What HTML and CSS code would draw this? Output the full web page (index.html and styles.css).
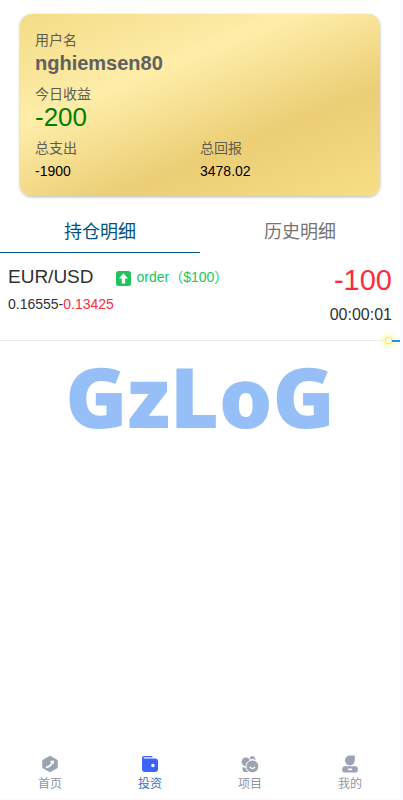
FILE: index.html
```
<!DOCTYPE html>
<html lang="zh">

<head>
    <meta charset="UTF-8">
    <meta name="viewport" content="width=device-width, initial-scale=1">
    <title>投资</title>
    <link rel="stylesheet" href="styles.css">
</head>

<body>
    <div class="page">
        <section class="card">
            <div class="card-item">
                <div class="label">用户名</div>
                <div class="user-name">nghiemsen80</div>
            </div>
            <div class="card-item">
                <div class="label">今日收益</div>
                <div class="income">-200</div>
            </div>
            <div class="card-row">
                <div class="card-item">
                    <div class="label">总支出</div>
                    <div class="total">-1900</div>
                </div>
                <div class="card-item">
                    <div class="label">总回报</div>
                    <div class="total">3478.02</div>
                </div>
            </div>
        </section>

        <div class="tabs">
            <button class="tab active" type="button">持仓明细</button>
            <button class="tab" type="button">历史明细</button>
        </div>

        <main class="main">
            <div class="order">
                <div class="order-left">
                    <div class="order-title">
                        <span class="pair">EUR/USD</span>
                        <svg class="arrow" viewBox="0 0 15 15">
                            <rect width="15" height="15" rx="2.5" fill="#21c45a"/>
                            <path d="M7.5 2.2L12 7.4H9.2V12.4H5.8V7.4H3z" fill="#fff"/>
                        </svg>
                        <span class="amount">order（$100）</span>
                    </div>
                    <div class="price">0.16555-<span class="down">0.13425</span></div>
                </div>
                <div class="order-right">
                    <div class="profit">-100</div>
                    <div class="time">00:00:01</div>
                </div>
            </div>
            <div class="countdown">
                <span class="dot"></span>
                <span class="rest"></span>
            </div>
            <div class="logo">GzLoG</div>
        </main>

        <nav class="nav">
            <a class="nav-item" href="#">
                <svg viewBox="0 0 18 18">
                    <path d="M9 .8L15.8 4.5Q16.8 5 16.8 6V12Q16.8 13 15.8 13.5L9 17.3L2.2 13.5Q1.2 13 1.2 12V6Q1.2 5 2.2 4.5z" fill="#9ca3b2"/>
                    <path d="M5 12.4Q9.2 11.8 11 7.6" fill="none" stroke="#fff" stroke-width="1.8"/>
                    <path d="M8.8 6L13 5.4L12.6 9.4z" fill="#fff"/>
                </svg>
                <span>首页</span>
            </a>
            <a class="nav-item active" href="#">
                <svg viewBox="0 0 18 18">
                    <path d="M3 1H10.6Q11.6 1 11.6 2.2H3.3Q2.6 2.2 2.6 2.8Q2.6 3.4 3.3 3.4H14Q17 3.4 17 6V14Q17 17 14 17H4Q1 17 1 14V3Q1 1 3 1z" fill="#3b63fb"/>
                    <circle cx="11.9" cy="10.5" r="1.7" fill="#fff"/>
                </svg>
                <span>投资</span>
            </a>
            <a class="nav-item" href="#">
                <svg viewBox="0 0 18 18">
                    <circle cx="5" cy="6.8" r="4.4" fill="#9ca3b2"/>
                    <path d="M8.8 2.2Q12 -.3 13.6 2.6L15 5.3Q11.5 3.2 9.4 4.5z" fill="#9ca3b2"/>
                    <path d="M1.5 12.2L5 12.8Q5.6 15.5 7.3 17H3.2Q1.2 16.8 1.5 12.2z" fill="#9ca3b2"/>
                    <circle cx="11.4" cy="11.4" r="6.4" fill="#9ca3b2" stroke="#fff"/>
                    <path d="M8.8 11.8Q11.4 15 14 11.8" fill="none" stroke="#fff" stroke-width="1.3"/>
                </svg>
                <span>项目</span>
            </a>
            <a class="nav-item" href="#">
                <svg viewBox="0 0 18 18">
                    <path d="M13.8 .6V5.6A4.9 4.9 0 1 1 8.9 .6z" fill="#9ca3b2"/>
                    <rect x="1.2" y="11.2" width="15.6" height="6.4" rx="2.6" fill="#9ca3b2"/>
                    <rect x="6.7" y="13.4" width="4.6" height="1.8" rx=".9" fill="#fff"/>
                </svg>
                <span>我的</span>
            </a>
        </nav>
    </div>
</body>

</html>
```
FILE: styles.css
```
* {
    box-sizing: border-box;
}
body {
    margin: 0;
    padding: 0 3px 1px 0;
    background-color: #f9f9ff;
    font-family: "Liberation Sans", "Noto Sans CJK SC", sans-serif;
    font-size: 14px;
    line-height: 20px;
    color: #000;
}
.page {
    display: flex;
    flex-direction: column;
    min-height: calc(100vh - 1px);
    background-color: #fff;
}

.card {
    display: flex;
    flex-direction: column;
    gap: 8px;
    margin: 14px 20px 12px;
    padding: 16px 15px 12px;
    border-radius: 12px;
    background-image: linear-gradient(158deg, #f3dc86 0%, #feeda9 34%, #ebce75 67%, #f7de85 100%);
    box-shadow: 0 1px 3px rgba(0, 0, 0, 0.3);
}
.card-row {
    display: grid;
    grid-template-columns: 1fr 1fr;
}
.label {
    color: #5f5c50;
}
.user-name {
    font-size: 20px;
    line-height: 26px;
    font-weight: bold;
    color: #606060;
}
.income {
    font-size: 26px;
    line-height: 26px;
    color: #008000;
}
.total {
    line-height: 26px;
}

.tabs {
    display: flex;
}
.tab {
    flex: 1;
    height: 45px;
    padding: 0;
    border: none;
    border-bottom: 1px solid transparent;
    background-color: transparent;
    font-family: inherit;
    font-size: 18px;
    color: #757575;
}
.tab.active {
    border-color: #005580;
    color: #005580;
}

.main {
    flex: 1;
}
.order {
    display: flex;
    justify-content: space-between;
    padding: 8px 8px 9px;
    color: #303133;
}
.order-title {
    display: flex;
    align-items: center;
    height: 32px;
}
.pair {
    font-size: 19px;
}
.arrow {
    width: 15px;
    height: 15px;
    margin: 2px 6px 0 22px;
}
.amount {
    color: #21c45a;
}
.down,
.profit {
    color: #fb2c3f;
}
.price {
    line-height: 22px;
}
.order-right {
    text-align: right;
}
.profit {
    font-size: 29px;
    line-height: 38px;
}
.time {
    font-size: 16px;
    line-height: 32px;
}

/* time left */
.countdown {
    display: flex;
    align-items: center;
    height: 1px;
    background-color: #ebebeb;
}
.dot {
    width: 7px;
    height: 7px;
    margin-left: auto;
    border: 1px solid #fbe58c;
    border-radius: 2px;
    background-color: #fffbd0;
    box-shadow: 0 0 5px 2px #fff7a0;
}
.rest {
    width: 8px;
    height: 2px;
    background-color: #1e96e0;
}

.logo {
    margin-top: 13px;
    text-align: center;
    font-family: "Noto Sans", "Open Sans", sans-serif;
    font-size: 84px;
    line-height: 84px;
    font-weight: 900;
    color: #96bff8;
}

.nav {
    position: sticky;
    bottom: 0;
    display: flex;
    padding: 4px 0 5px;
    background-color: #fff;
}
.nav-item {
    display: flex;
    flex: 1;
    flex-direction: column;
    align-items: center;
    gap: 1px;
    font-size: 12px;
    color: #8d96a3;
    text-decoration: none;
}
.nav-item.active {
    color: #3672c4;
}
.nav-item svg {
    width: 18px;
    height: 18px;
}
```
